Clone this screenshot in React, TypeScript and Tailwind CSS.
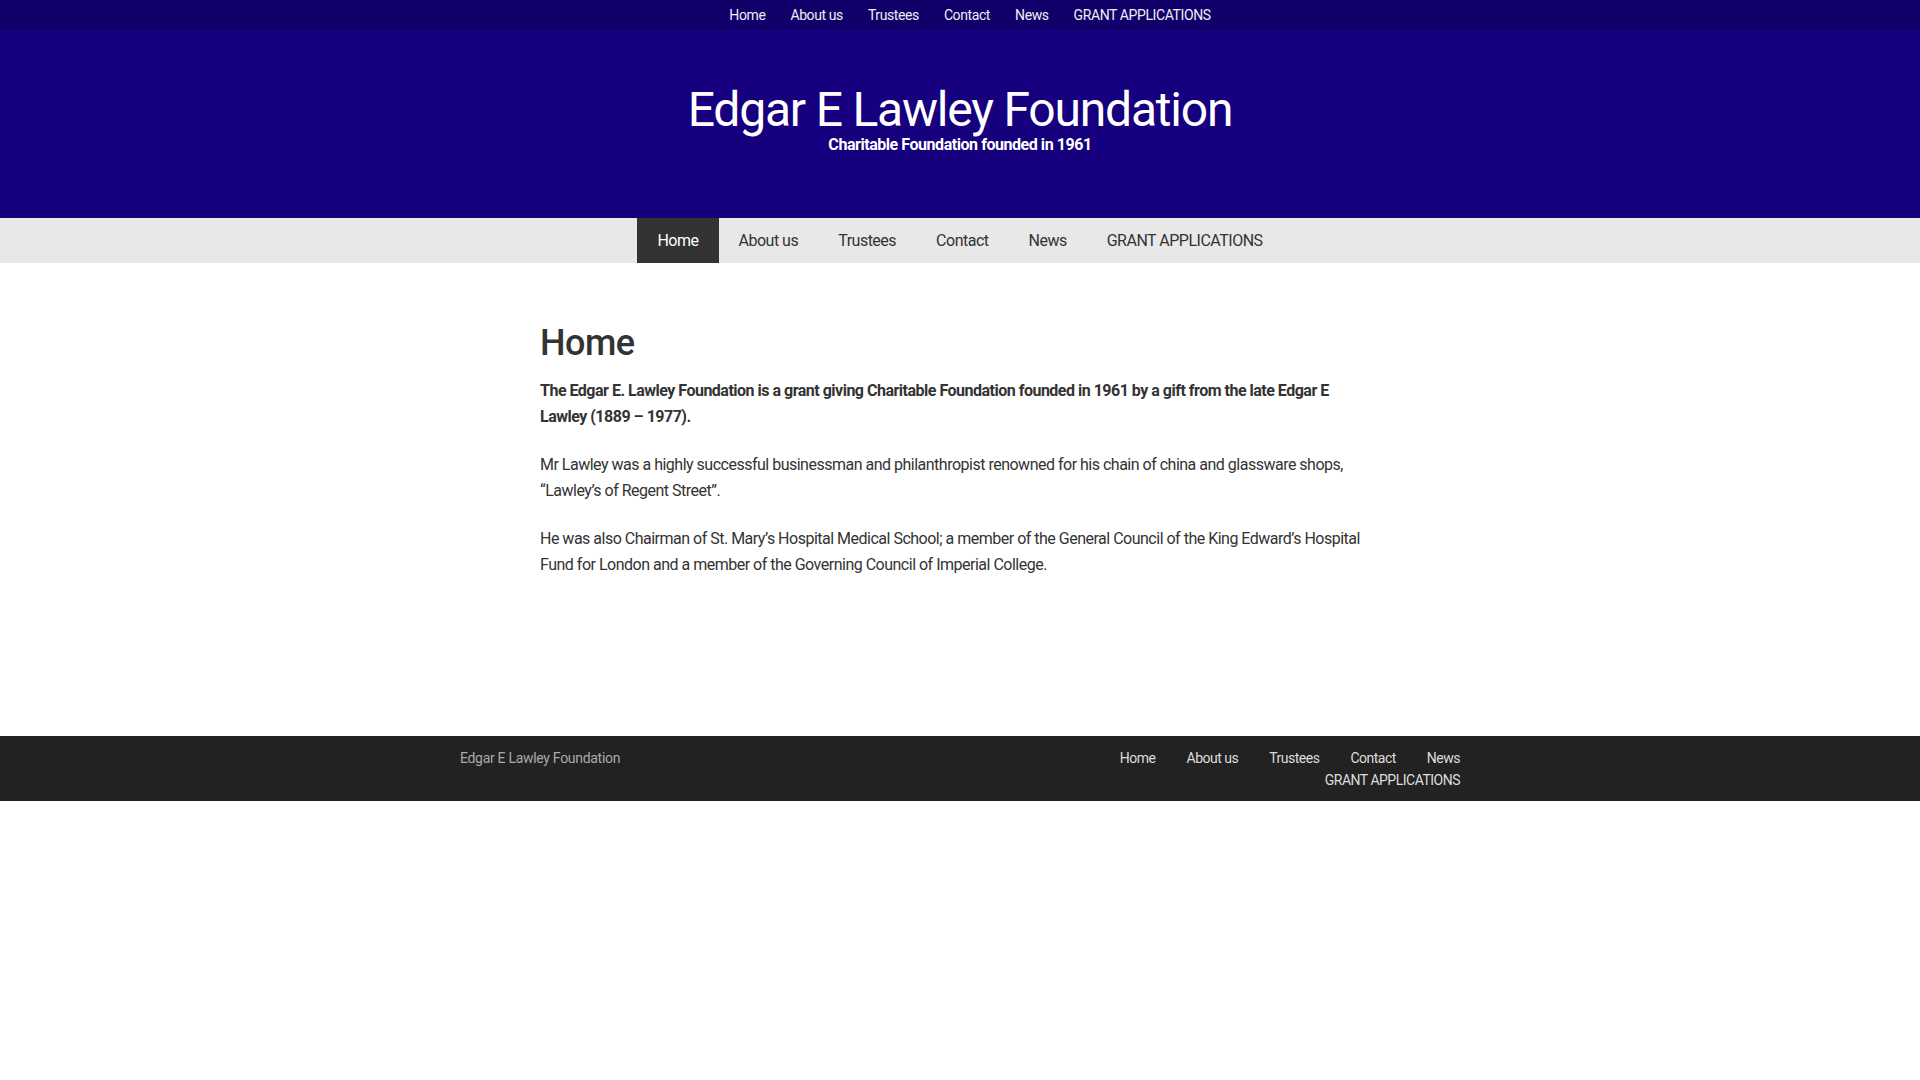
const navItems = ["Home", "About us", "Trustees", "Contact", "News", "GRANT APPLICATIONS"];

const bodyFont = { fontFamily: '"Liberation Sans Narrow", "Roboto", sans-serif' };

export default function App() {
  return (
    <div className="min-h-screen bg-white" style={bodyFont}>
      {/* top menu */}
      <div className="flex h-[30px] items-center justify-center bg-[#12006a] pl-[20px]">
        <ul className="flex gap-[25px] text-[14px] tracking-[-0.4px] text-[#eeeeee]">
          {navItems.map((item) => (
            <li key={item}>{item}</li>
          ))}
        </ul>
      </div>

      {/* header */}
      <header className="flex h-[188px] flex-col items-center bg-[#16007e] pt-[53px] text-white">
        <h1 className="text-[48px] leading-[54px] tracking-[-1.2px]">Edgar E Lawley Foundation</h1>
        <p className="text-[16px] font-bold leading-[16px] tracking-[-0.45px]">
          Charitable Foundation founded in 1961
        </p>
      </header>

      {/* main menu */}
      <nav className="flex h-[45px] justify-center bg-[#e8e8e8]">
        <ul className="flex text-[16px] tracking-[-0.5px] text-[#333333]">
          {navItems.map((item, i) => (
            <li
              key={item}
              className={
                i === 0
                  ? "flex items-center bg-[#333333] px-[20px] text-white"
                  : "flex items-center px-[20px]"
              }
            >
              {item}
            </li>
          ))}
        </ul>
      </nav>

      {/* content */}
      <main className="mx-auto w-[840px] pt-[50px] pb-[158px] text-[16px] leading-[26px] tracking-[-0.5px] text-[#333333]">
        <h2 className="mb-[5px] text-[36px] font-medium leading-[60px]">Home</h2>
        <div className="mr-[-12px]">
          <p className="mb-[22px] w-[820px] font-bold">
            The Edgar E. Lawley Foundation is a grant giving Charitable Foundation founded in 1961 by a gift from the
            late Edgar E Lawley (1889 – 1977).
          </p>
          <p className="mb-[22px]">
            Mr Lawley was a highly successful businessman and philanthropist renowned for his chain of china and
            glassware shops, “Lawley’s of Regent Street”.
          </p>
          <p>
            He was also Chairman of St. Mary’s Hospital Medical School; a member of the General Council of the King
            Edward’s Hospital Fund for London and a member of the Governing Council of Imperial College.
          </p>
        </div>
      </main>

      {/* footer */}
      <footer className="h-[65px] bg-[#222222]">
        <div className="mx-auto flex w-[1000px] justify-between pt-[11px] text-[14px] leading-[22px]">
          <div className="tracking-[-0.3px] text-[#aaaaaa]">Edgar E Lawley Foundation</div>
          <ul className="flex w-[420px] flex-wrap justify-end gap-x-[31px] tracking-[-0.5px] text-[#dddddd]">
            {navItems.map((item) => (
              <li key={item}>{item}</li>
            ))}
          </ul>
        </div>
      </footer>
    </div>
  );
}
